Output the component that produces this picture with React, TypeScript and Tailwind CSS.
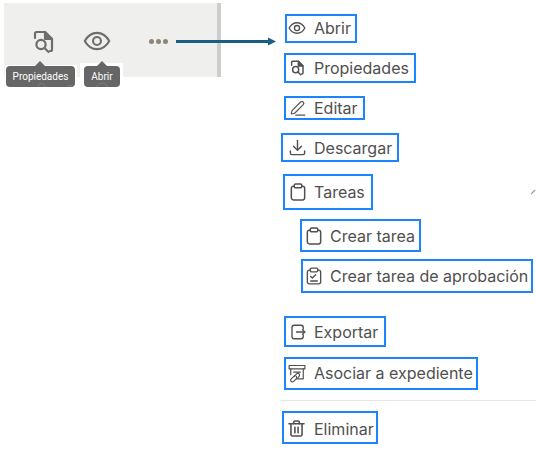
import React from "react";

type IconProps = { className?: string };

const base = {
  viewBox: "0 0 24 24",
  fill: "none",
  stroke: "currentColor",
  strokeWidth: 1.8,
  strokeLinecap: "round" as const,
  strokeLinejoin: "round" as const,
};

const EyeIcon = ({ className }: IconProps) => (
  <svg {...base} className={className}>
    <path d="M1.500 12C4 7.500 7.600 5 12 5s8 2.500 10.500 7c-2.500 4.500-6.100 7-10.500 7s-8-2.500-10.500-7Z" />
    <circle cx="12" cy="12" r="3.400" />
  </svg>
);

const FileSearchIcon = ({ className }: IconProps) => (
  <svg {...base} strokeWidth={2.2} className={className}>
    <path d="M4 8V3.500A1.500 1.500 0 0 1 5.500 2H14l7 7v10.500a1.500 1.500 0 0 1-1.500 1.500H19" />
    <path d="M14 2v7h7Z" fill="currentColor" />
    <circle cx="10" cy="14.500" r="4.600" />
    <path d="m13.500 18 4 4" />
  </svg>
);

const PencilLineIcon = ({ className }: IconProps) => (
  <svg {...base} strokeWidth={1.5} className={className}>
    <path d="M3 20 4 15.500 15.500 4a2.300 2.300 0 0 1 3.500 3.500L7.500 19Z" />
    <path d="M9 21.500h12" />
  </svg>
);

const DownloadIcon = ({ className }: IconProps) => (
  <svg {...base} className={className}>
    <path d="M12 3v12" />
    <path d="m7 10.500 5 5 5-5" />
    <path d="M3 16.500V19a2 2 0 0 0 2 2h14a2 2 0 0 0 2-2v-2.500" />
  </svg>
);

const ClipboardIcon = ({ className }: IconProps) => (
  <svg {...base} className={className}>
    <path d="M7.500 5H6.500A2.500 2.500 0 0 0 4 7.500V19a2.500 2.500 0 0 0 2.500 2.500h11A2.500 2.500 0 0 0 20 19V7.500A2.500 2.500 0 0 0 17.500 5h-1" />
    <rect x="7.500" y="2.500" width="9" height="4.500" rx="1.500" />
  </svg>
);

const ClipboardCheckIcon = ({ className }: IconProps) => (
  <svg {...base} strokeWidth={1.6} className={className}>
    <path d="M7.500 5H6.500A2.500 2.500 0 0 0 4 7.500V19a2.500 2.500 0 0 0 2.500 2.500h11A2.500 2.500 0 0 0 20 19V7.500A2.500 2.500 0 0 0 17.500 5h-1" />
    <rect x="7.500" y="2.500" width="9" height="4.500" rx="1.500" />
    <path d="m8 12.500 2 2 4-4" />
    <path d="M8 18h8" />
  </svg>
);

const ExportIcon = ({ className }: IconProps) => (
  <svg {...base} className={className}>
    <path d="M19 8V6a3 3 0 0 0-3-3H7a3 3 0 0 0-3 3v12a3 3 0 0 0 3 3h9a3 3 0 0 0 3-3v-2" />
    <path d="M10 12h11" />
    <path d="m18 9 3 3-3 3" />
  </svg>
);

const LinkFolderIcon = ({ className }: IconProps) => (
  <svg {...base} strokeWidth={1.4} className={className}>
    <path d="M2.500 3h19v4h-19Z" />
    <path d="M4.500 7v7M19.500 7v12h-8" />
    <path d="M8 11h8" />
    <path d="m8.500 16 3-3a2.100 2.100 0 0 1 3 3l-1.500 1.500" />
    <path d="m9.500 15-4.500 4a2.100 2.100 0 0 0 3 3l3-3a2.100 2.100 0 0 0 0-3" />
  </svg>
);

const TrashIcon = ({ className }: IconProps) => (
  <svg {...base} strokeWidth={2} className={className}>
    <path d="M2.500 6h19" />
    <path d="M8.500 6V4a1.500 1.500 0 0 1 1.500-1.500h4A1.500 1.500 0 0 1 15.500 4v2" />
    <path d="M5 6v13.500A2 2 0 0 0 7 21.500h10a2 2 0 0 0 2-2V6" />
    <path d="M10 10.500v7M14 10.500v7" />
  </svg>
);

type BoxProps = {
  icon: React.ReactNode;
  label: string;
  className: string;
};

// blue annotation box around one menu entry
const MenuBox = ({ icon, label, className }: BoxProps) => (
  <div
    className={`flex items-center border-2 border-[#1a85ff] text-[#505050] text-[16px] leading-none whitespace-nowrap ${className}`}
  >
    {icon}
    <span>{label}</span>
  </div>
);

function Toolbar() {
  return (
    <div className="relative h-[90px] pt-[3px] pl-[4px]">
      <div className="flex items-start w-[217px] h-[74px] bg-[#efefed] border-r-[4px] border-[#cdcdcd] text-[#6e6e6e]">
        <FileSearchIcon className="shrink-0 w-[24px] h-[24px] ml-[27px] mt-[27px]" />
        <EyeIcon className="shrink-0 w-[28px] h-[28px] ml-[28px] mt-[24px]" />
        <div className="flex gap-[2px] ml-[38px] mt-[36px]">
          <span className="w-[5px] h-[5px] rounded-full bg-[#8f8577]" />
          <span className="w-[5px] h-[5px] rounded-full bg-[#8f8577]" />
          <span className="w-[5px] h-[5px] rounded-full bg-[#8f8577]" />
        </div>
      </div>

      {/* tooltips sit over the bottom edge of the toolbar */}
      <div className="absolute left-[5px] top-[65px] w-[72px] h-[12px] bg-white" />
      <div className="absolute left-[80px] top-[63px] w-[43px] h-[26px] bg-white" />
      <div className="absolute left-[6px] top-[66px] w-[69px] h-[21px] rounded-[4px] bg-[#666666] text-white text-[10px] flex items-center justify-center [font-family:Roboto,sans-serif]">
        Propiedades
      </div>
      <div className="absolute left-[35px] top-[61px] w-0 h-0 border-x-[5px] border-x-transparent border-b-[5px] border-b-[#666666]" />
      <div className="absolute left-[84px] top-[66px] w-[36px] h-[21px] rounded-[4px] bg-[#666666] text-white text-[10px] flex items-center justify-center [font-family:Roboto,sans-serif]">
        Abrir
      </div>
      <div className="absolute left-[97px] top-[61px] w-0 h-0 border-x-[5px] border-x-transparent border-b-[5px] border-b-[#666666]" />

      {/* bits of the icon row below that peek out under the tooltips */}
      <svg className="absolute left-[36px] top-[82px] w-[72px] h-[6px]" viewBox="0 0 72 6" fill="none" stroke="#7d7d7d">
        <path d="M2 5a3.500 3.500 0 0 1 7 0" />
        <path d="M31 5a3.500 3.500 0 0 1 6 0" />
        <path d="M61 5a5 4 0 0 1 10 0" />
      </svg>

      {/* callout arrow from the dots to the menu */}
      <svg className="absolute left-[176px] top-[36px] w-[100px] h-[12px]" viewBox="0 0 100 12">
        <path d="M0 5.500h93" stroke="#1a5f82" strokeWidth="3" />
        <path d="M92 1.500 100 5.500 92 9.500Z" fill="#1a5f82" />
      </svg>
    </div>
  );
}

export default function App() {
  return (
    <div className="relative flex w-[536px] h-[450px] overflow-hidden bg-white [font-family:Inter,sans-serif]">
      <div className="w-[281px] shrink-0">
        <Toolbar />
      </div>

      <div className="flex-1 flex flex-col items-start">
        <MenuBox
          className="ml-[4px] mt-[14px] w-[72px] h-[29px] pl-[1px] pb-[2px]"
          icon={<EyeIcon className="shrink-0 w-[18px] h-[18px] mr-[8px]" />}
          label="Abrir"
        />
        <MenuBox
          className="ml-[3px] mt-[10px] w-[132px] h-[30px] pl-[3px]"
          icon={<FileSearchIcon className="shrink-0 w-[16px] h-[16px] mr-[9px]" />}
          label="Propiedades"
        />
        <MenuBox
          className="ml-[3px] mt-[13px] w-[81px] h-[24px] pl-[3px]"
          icon={<PencilLineIcon className="shrink-0 w-[18px] h-[18px] mr-[7px]" />}
          label="Editar"
        />
        <MenuBox
          className="mt-[13px] w-[118px] h-[29px] pl-[5px]"
          icon={<DownloadIcon className="shrink-0 w-[19px] h-[19px] mr-[7px]" />}
          label="Descargar"
        />
        <div className="flex items-center justify-between w-full mt-[12px]">
          <MenuBox
            className="ml-[2px] w-[90px] h-[36px] pl-[3px]"
            icon={<ClipboardIcon className="shrink-0 w-[20px] h-[20px] mr-[6px]" />}
            label="Tareas"
          />
          <svg className="w-[5px] h-[6px]" viewBox="0 0 5 6">
            <path d="M0 5 4 1" stroke="#9a9a9a" strokeWidth="1.200" />
          </svg>
        </div>
        <MenuBox
          className="ml-[19px] mt-[9px] w-[121px] h-[33px] pl-[2px]"
          icon={<ClipboardIcon className="shrink-0 w-[20px] h-[20px] mr-[6px]" />}
          label="Crear tarea"
        />
        <MenuBox
          className="ml-[20px] mt-[7px] w-[232px] h-[34px] pl-[1px]"
          icon={<ClipboardCheckIcon className="shrink-0 w-[20px] h-[20px] mr-[6px]" />}
          label="Crear tarea de aprobación"
        />
        <MenuBox
          className="ml-[3px] mt-[23px] w-[102px] h-[31px] pl-[3px]"
          icon={<ExportIcon className="shrink-0 w-[18px] h-[18px] mr-[7px]" />}
          label="Exportar"
        />
        <MenuBox
          className="ml-[3px] mt-[10px] w-[194px] h-[33px] pl-[1px] pb-[2px]"
          icon={<LinkFolderIcon className="shrink-0 w-[20px] h-[20px] mr-[7px]" />}
          label="Asociar a expediente"
        />
        <div className="w-full h-px bg-[#e6e6e6] mt-[10px]" />
        <MenuBox
          className="ml-[1px] mt-[10px] w-[96px] h-[33px] pl-[3px] pt-[2px]"
          icon={<TrashIcon className="shrink-0 w-[19px] h-[19px] mr-[8px]" />}
          label="Eliminar"
        />
      </div>
    </div>
  );
}
